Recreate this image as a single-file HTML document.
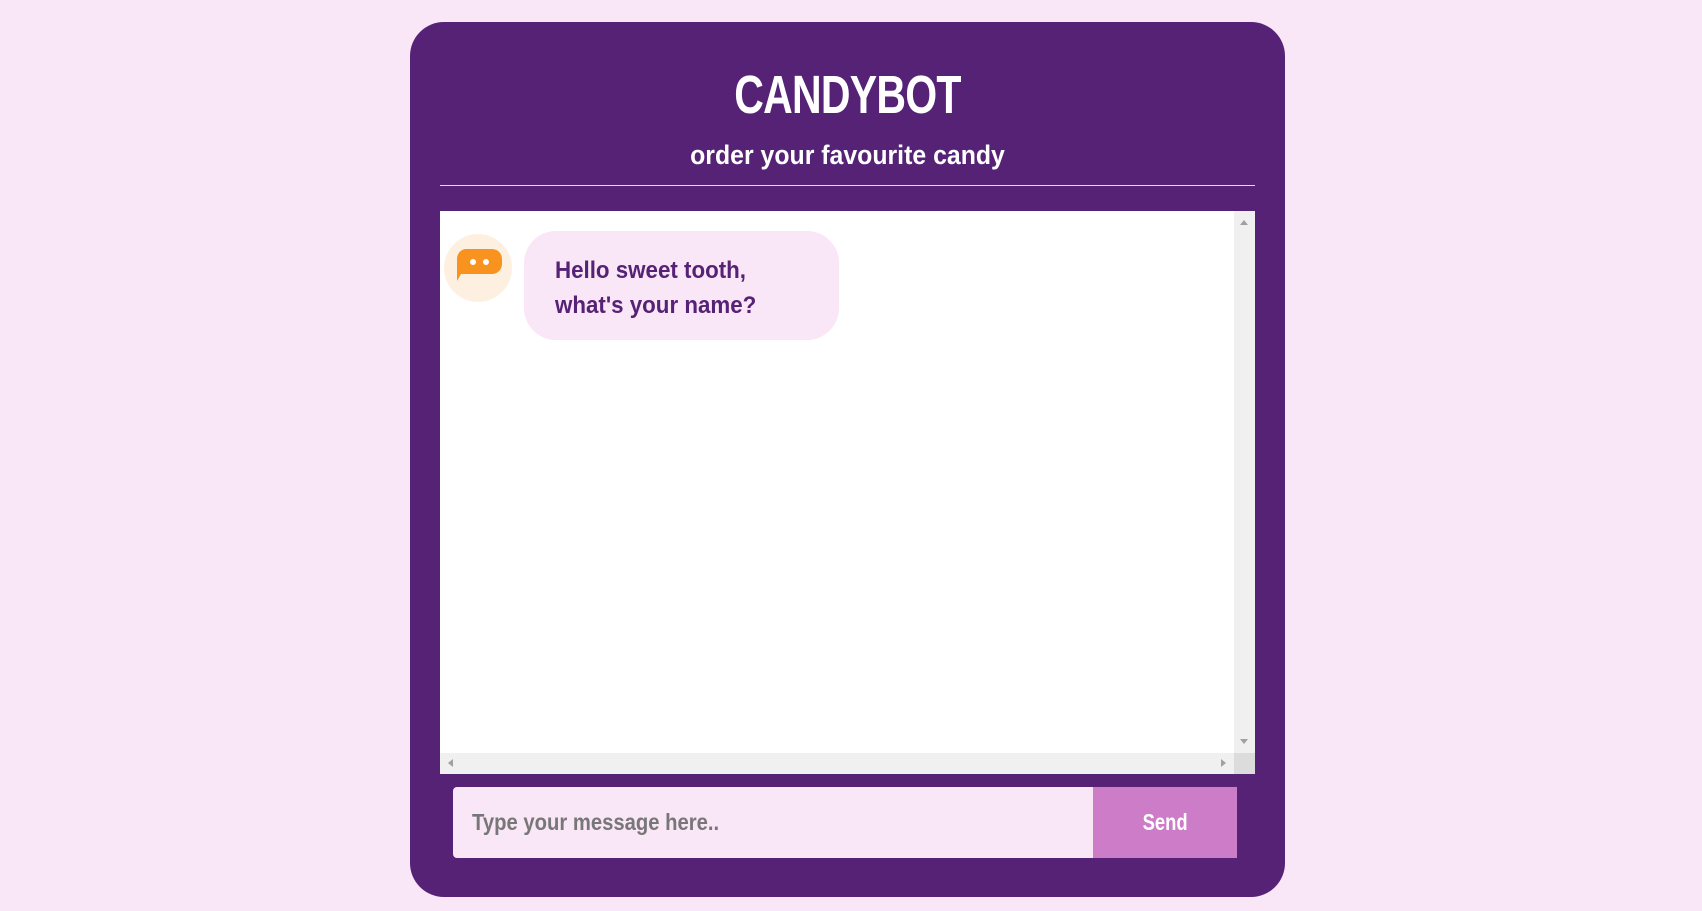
<!DOCTYPE html>
<html><head><style>
*{box-sizing:border-box;margin:0;padding:0}
body{width:1702px;height:911px;background:#f9e6f6;font-family:"Liberation Sans Narrow","Liberation Sans",sans-serif;position:relative;overflow:hidden}
.card{position:absolute;left:410px;top:22px;width:875px;height:875px;background:#562276;border-radius:34px}
h1{position:absolute;left:410px;width:875px;top:64px;text-align:center;color:#fff;font-size:54px;font-weight:bold;letter-spacing:-1px;transform:scaleX(0.76)}
h2{position:absolute;left:410px;width:875px;top:140px;text-align:center;color:#fff;font-size:27px;font-weight:bold;transform:scaleX(0.92)}
.hr{position:absolute;left:440px;top:185px;width:815px;height:1px;background:#e8d8ee}
.chat{position:absolute;left:440px;top:211px;width:815px;height:563px;background:#fff}
.vs{position:absolute;right:0;top:0;width:21px;height:542px;background:#f0f0f0}
.hs{position:absolute;left:0;bottom:0;width:794px;height:21px;background:#f0f0f0}
.corner{position:absolute;right:0;bottom:0;width:21px;height:21px;background:#dcdcdc}
.av{position:absolute;left:4px;top:23px;width:68px;height:68px;border-radius:50%;background:#fdf0e1}
.bub{position:absolute;left:84px;top:20px;width:315px;height:109px;background:#f9e6f6;border-radius:32px;color:#562276;font-weight:bold;font-size:24px;line-height:35px;padding:22px 0 0 31px}
.bub span{display:inline-block;transform:scaleX(0.93);transform-origin:left}
.in{position:absolute;left:453px;top:787px;width:640px;height:71px;background:#f9e6f6;border-radius:4px 0 0 4px;color:#777;font-size:23px;font-weight:bold;line-height:71px;padding-left:19px}
.in span{display:inline-block;transform:scaleX(0.88);transform-origin:left}
.send{position:absolute;left:1093px;top:787px;width:144px;height:71px;background:#cd7dc7;color:#fff;font-size:23px;line-height:71px;text-align:center;font-weight:bold}
.send span{display:inline-block;transform:scaleX(0.8)}
</style></head><body>
<div class="card"></div>
<h1>CANDYBOT</h1>
<h2>order your favourite candy</h2>
<div class="hr"></div>
<div class="chat">
 <div class="vs"><div style="position:absolute;left:6px;top:9px;border:4px solid transparent;border-bottom:5px solid #a0a0a0;border-top:0"></div><div style="position:absolute;left:6px;bottom:9px;border:4px solid transparent;border-top:5px solid #a0a0a0;border-bottom:0"></div></div>
 <div class="hs"><div style="position:absolute;left:8px;top:6px;border:4px solid transparent;border-right:5px solid #a0a0a0;border-left:0"></div><div style="position:absolute;right:8px;top:6px;border:4px solid transparent;border-left:5px solid #a0a0a0;border-right:0"></div></div>
 <div class="corner"></div>
 <div class="av"><svg width="68" height="68" viewBox="0 0 68 68"><path d="M21 15h27a10 10 0 0 1 10 10v5a10 10 0 0 1-10 10H17l-4 7V25a10 10 0 0 1 8-10z" fill="#f7931e"/><circle cx="29" cy="28" r="3" fill="#fff"/><circle cx="42" cy="28" r="3" fill="#fff"/></svg></div>
 <div class="bub"><span>Hello sweet tooth,</span><br><span>what's your name?</span></div>
</div>
<div class="in"><span>Type your message here..</span></div>
<div class="send"><span>Send</span></div>
</body></html>
